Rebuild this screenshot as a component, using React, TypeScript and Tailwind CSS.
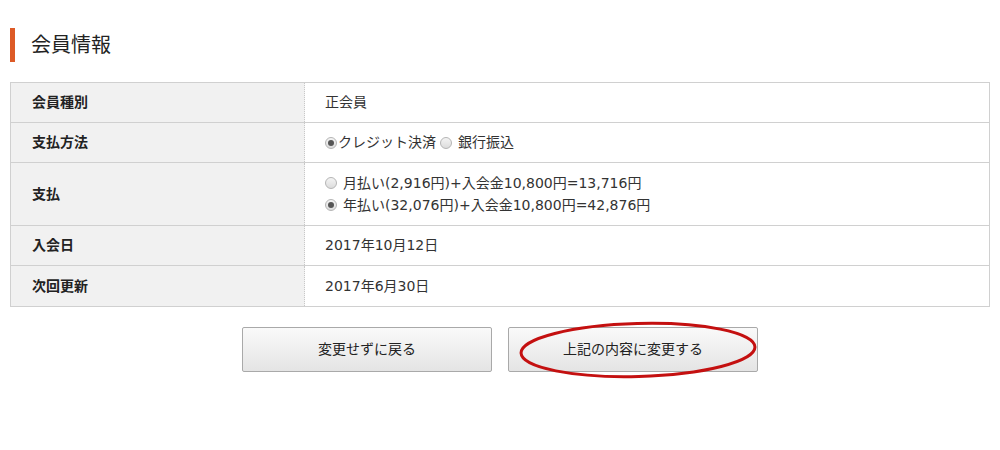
import React from "react";

function Radio({ checked }: { checked?: boolean }) {
  return (
    <span className="inline-flex items-center justify-center w-[12px] h-[12px] rounded-full border border-[#b5b5b5] bg-gradient-to-b from-[#f4f4f4] to-[#dcdcdc] align-middle">
      {checked && <span className="w-[6px] h-[6px] rounded-full bg-[#555]" />}
    </span>
  );
}

function Row({ label, children, h = "h-[40px]", last }: { label: string; children: React.ReactNode; h?: string; last?: boolean }) {
  return (
    <div className={`flex ${h} ${last ? "" : "border-b border-[#d0d0d0]"}`}>
      <div className="w-[294px] bg-[#f1f1f1] border-r border-dotted border-[#c8c8c8] flex items-center pl-[21px] font-bold text-[14px] text-[#222]">
        {label}
      </div>
      <div className="flex-1 flex flex-col justify-center pl-[20px] text-[14px] text-[#333]">{children}</div>
    </div>
  );
}

export default function App() {
  return (
    <div className="w-[1000px] h-[450px] bg-white relative" style={{ fontFamily: '"DejaVu Sans", "Noto Sans CJK JP", sans-serif' }}>
      <div className="pt-[28px] pl-[10px] flex items-center h-[62px]">
        <div className="w-[5px] h-[34px] bg-[#dd5a26]" />
        <div className="ml-[16px] text-[20px] text-[#222] leading-none">会員情報</div>
      </div>
      <div className="mt-[20px] mx-[10px] border border-[#d0d0d0]">
        <Row label="会員種別">正会員</Row>
        <Row label="支払方法">
          <div className="flex items-center">
            <Radio checked />
            <span className="ml-[1px]">クレジット決済</span>
            <span className="ml-[4px]"><Radio /></span>
            <span className="ml-[6px]">銀行振込</span>
          </div>
        </Row>
        <Row label="支払" h="h-[63px]">
          <div className="flex items-center h-[22px]">
            <Radio />
            <span className="ml-[6px]">月払い(2,916円)+入会金10,800円=13,716円</span>
          </div>
          <div className="flex items-center h-[22px]">
            <Radio checked />
            <span className="ml-[6px]">年払い(32,076円)+入会金10,800円=42,876円</span>
          </div>
        </Row>
        <Row label="入会日">2017年10月12日</Row>
        <Row label="次回更新" last>2017年6月30日</Row>
      </div>
      <div className="mt-[20px] flex justify-center gap-[16px]">
        <button className="w-[250px] h-[45px] border border-[#a9a9a9] rounded-[2px] bg-gradient-to-b from-[#fafafa] to-[#e4e4e4] text-[14px] text-[#222]">
          変更せずに戻る
        </button>
        <div className="relative">
          <button className="w-[250px] h-[45px] border border-[#a9a9a9] rounded-[2px] bg-gradient-to-b from-[#fafafa] to-[#e4e4e4] text-[14px] text-[#222]">
            上記の内容に変更する
          </button>
          <svg className="absolute left-[10px] top-[-6px] pointer-events-none" width="240" height="58" viewBox="0 0 240 58">
            <ellipse cx="120" cy="29" rx="117" ry="26.5" fill="none" stroke="#c41010" strokeWidth="3" transform="rotate(-1.5 120 29)" />
          </svg>
        </div>
      </div>
    </div>
  );
}
